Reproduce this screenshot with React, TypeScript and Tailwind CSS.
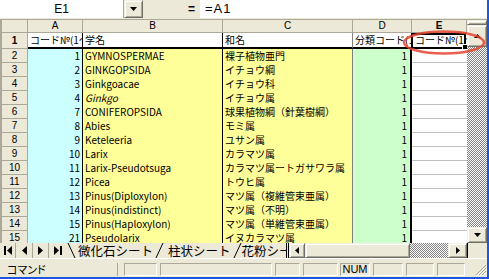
import React from "react";

type Row = { a: string; b: string; c: string; italic?: boolean };

const data: Row[] = [
  { a: "1", b: "GYMNOSPERMAE", c: "裸子植物亜門" },
  { a: "2", b: "GINKGOPSIDA", c: "イチョウ綱" },
  { a: "3", b: "Ginkgoacae", c: "イチョウ科" },
  { a: "4", b: "Ginkgo", c: "イチョウ属", italic: true },
  { a: "7", b: "CONIFEROPSIDA", c: "球果植物綱（針葉樹綱）" },
  { a: "8", b: "Abies", c: "モミ属" },
  { a: "9", b: "Keteleeria", c: "ユサン属" },
  { a: "10", b: "Larix", c: "カラマツ属" },
  { a: "11", b: "Larix-Pseudotsuga", c: "カラマツ属ートガサワラ属" },
  { a: "12", b: "Picea", c: "トウヒ属" },
  { a: "13", b: "Pinus(Diploxylon)", c: "マツ属（複維管束亜属）" },
  { a: "14", b: "Pinus(indistinct)", c: "マツ属（不明）" },
  { a: "15", b: "Pinus(Haploxylon)", c: "マツ属（単維管束亜属）" },
  { a: "21", b: "Pseudolarix", c: "イヌカラマツ属" },
];

function Tri({ dir, w, h }: { dir: "up" | "down" | "left" | "right"; w: number; h: number }) {
  let pts = "";
  if (dir === "up") pts = `0,${h} ${w},${h} ${w / 2},0`;
  if (dir === "down") pts = `0,0 ${w},0 ${w / 2},${h}`;
  if (dir === "left") pts = `${w},0 ${w},${h} 0,${h / 2}`;
  if (dir === "right") pts = `0,0 0,${h} ${w},${h / 2}`;
  return (
    <svg width={w} height={h} viewBox={`0 0 ${w} ${h}`}>
      <polygon points={pts} fill="#000" />
    </svg>
  );
}

const btn =
  "bg-[#ece9d8] border border-t-[#f1efe2] border-l-[#f1efe2] border-r-[#716f64] border-b-[#716f64] shadow-[inset_1px_1px_0_#ffffff,inset_-1px_-1px_0_#aca899] flex items-center justify-center";
const checker =
  "bg-[image:repeating-conic-gradient(#808080_0_25%,#ffffff_0_50%)] bg-[length:2px_2px]";
const hdr =
  "bg-[#ece9d8] border-r border-b border-[#aca899] flex items-center justify-center font-['Liberation_Sans',sans-serif] text-[10px] leading-none text-black";
const cell = "whitespace-nowrap overflow-hidden text-[10px] leading-[14px]";
const panel = "h-full border border-t-[#aca899] border-l-[#aca899] border-b-white border-r-white";

export default function App() {
  return (
    <div className="relative w-[489px] h-[279px] overflow-hidden bg-[#ece9d8] border-r-2 border-b-2 border-[#1a58e0] flex flex-col font-['Noto_Sans_CJK_JP',sans-serif] text-black">
      {/* formula bar */}
      <div className="h-[20px] shrink-0 flex items-start border-b border-[#aca899]">
        <div className="w-[124px] h-[18px] bg-white border-r border-[#aca899] flex items-center justify-center font-['Liberation_Sans',sans-serif] text-[12px]">
          E1
        </div>
        <div className={`w-[19px] h-[18px] ${btn}`}>
          <Tri dir="down" w={7} h={4} />
        </div>
        <div className="w-[57px] h-[18px] flex items-center justify-end pr-[5px] font-['Liberation_Sans',sans-serif] text-[12px] font-bold">
          =
        </div>
        <div className="flex-1 h-[18px] bg-white flex items-center pl-[5px] font-['Liberation_Sans',sans-serif] text-[13px] tracking-[1px]">
          =A1
        </div>
      </div>

      {/* sheet area */}
      <div className="h-[223px] shrink-0 flex">
        <div className="w-[467px] h-full overflow-hidden border-l-2 border-[#aca899] bg-white">
          <div className="grid grid-cols-[26px_55px_140px_130px_59px_55px] grid-rows-[13px_16px_repeat(14,14px)]">
            {/* header row */}
            <div className={hdr} />
            <div className={hdr}>A</div>
            <div className={hdr}>B</div>
            <div className={hdr}>C</div>
            <div className={hdr}>D</div>
            <div className={`${hdr} font-bold`}>E</div>

            {/* row 1 */}
            <div className={`${hdr} font-bold`}>1</div>
            <div className={`${cell} bg-white border-r border-black border-b-2 border-b-black pl-[2px]`}>コード№(1～</div>
            <div className={`${cell} bg-white border-r border-black border-b-2 border-b-black pl-[2px]`}>学名</div>
            <div className={`${cell} bg-white border-r border-[#808080] border-b-2 border-b-black pl-[2px]`}>和名</div>
            <div className={`${cell} bg-white border-r border-[#c0c0c0] border-b-2 border-b-black pl-[2px]`}>分類コード(1～</div>
            <div className="relative bg-white border-b-2 border-black">
              <div className={`${cell} pl-[3px] pr-[2px]`}>コード№(1～</div>
              <div className="absolute -left-px top-0 right-px -bottom-[2px] border-2 border-black" />
              <div className="absolute left-[50px] top-[11px] w-[6px] h-[6px] bg-black border border-white" />
            </div>

            {data.map((r, i) => (
              <React.Fragment key={i}>
                <div className={hdr}>{i + 2}</div>
                <div className={`${cell} bg-[#ccffff] border-r border-black text-right pr-[2px]`}>{r.a}</div>
                <div className={`${cell} bg-[#ffff99] border-r border-black pl-[2px] ${r.italic ? "italic" : ""}`}>{r.b}</div>
                <div className={`${cell} bg-[#ffff99] border-r border-[#808080] pl-[2px]`}>{r.c}</div>
                <div className={`${cell} bg-[#ccffcc] border-r-2 border-black text-right pr-[3px]`}>1</div>
                <div className="bg-white border-b border-[#c0c0c0]" />
              </React.Fragment>
            ))}
          </div>
        </div>

        {/* vertical scrollbar */}
        <div className="w-[20px] h-full flex flex-col">
          <div className={`h-[5px] ${btn}`} />
          <div className={`h-[22px] ${btn}`}>
            <Tri dir="up" w={7} h={4} />
          </div>
          <div className={`flex-1 ${checker}`} />
          <div className={`h-[16px] ${btn}`}>
            <Tri dir="down" w={7} h={4} />
          </div>
        </div>
      </div>

      {/* tab bar + horizontal scrollbar */}
      <div className="h-[15px] shrink-0 flex items-stretch">
        <div className="w-[66px] flex items-stretch">
          <div className="w-[16px] border-r border-[#aca899] flex items-center justify-center gap-[1px]">
            <div className="w-[2px] h-[9px] bg-black" />
            <Tri dir="left" w={5} h={9} />
          </div>
          <div className="w-[17px] border-r border-[#aca899] flex items-center justify-center">
            <Tri dir="left" w={5} h={9} />
          </div>
          <div className="w-[16px] border-r border-[#aca899] flex items-center justify-center">
            <Tri dir="right" w={5} h={9} />
          </div>
          <div className="w-[17px] flex items-center justify-center gap-[1px]">
            <Tri dir="right" w={5} h={9} />
            <div className="w-[2px] h-[9px] bg-black" />
          </div>
        </div>
        <div className="w-[220px] overflow-hidden flex items-stretch text-[12.5px] leading-[15px] whitespace-nowrap">
          <svg width="9" height="15" className="shrink-0 ml-[1px]">
            <line x1="1" y1="0" x2="8" y2="15" stroke="#000" strokeWidth="1" />
          </svg>
          <span className="ml-[2px]">微化石シート</span>
          <svg width="9" height="15" className="shrink-0 ml-[2px]">
            <line x1="1" y1="15" x2="8" y2="0" stroke="#000" strokeWidth="1" />
          </svg>
          <span className="ml-[4px]">柱状シート</span>
          <svg width="9" height="15" className="shrink-0 ml-[2px]">
            <line x1="1" y1="15" x2="8" y2="0" stroke="#000" strokeWidth="1" />
          </svg>
          <span>花粉シート</span>
        </div>
        <div className="w-[3px] border-l border-[#aca899] border-r border-black" />
        <div className={`w-[16px] ${btn}`}>
          <Tri dir="left" w={4} h={7} />
        </div>
        <div className={`w-[105px] ${btn}`} />
        <div className={`w-[38px] ${checker}`} />
        <div className={`w-[19px] ${btn}`}>
          <Tri dir="right" w={4} h={7} />
        </div>
        <div className="w-[20px] border-l border-black" />
      </div>

      {/* status bar */}
      <div className="h-[19px] shrink-0 flex pt-[4px] pb-[1px] border-t border-white">
        <div className="w-[118px] h-full border-r border-[#aca899] flex items-center pl-[7px] text-[11px] [font-feature-settings:'palt']">
          コマンド
        </div>
        <div className={`ml-[6px] w-[33px] ${panel}`} />
        <div className={`ml-[3px] w-[112px] ${panel}`} />
        <div className={`ml-[3px] w-[25px] ${panel}`} />
        <div className={`ml-[3px] w-[35px] ${panel}`} />
        <div className={`ml-[2px] w-[30px] ${panel} flex items-center justify-center font-['Liberation_Sans',sans-serif] text-[11px] leading-none`}>
          NUM
        </div>
        <div className={`ml-[3px] w-[30px] ${panel}`} />
        <div className={`ml-[3px] w-[28px] ${panel}`} />
        <div className={`ml-[3px] w-[28px] ${panel}`} />
        <div className="flex-1 h-full flex items-end justify-end">
          <svg width="12" height="12" viewBox="0 0 12 12">
            <line x1="11" y1="1" x2="1" y2="11" stroke="#aca899" strokeWidth="1" />
            <line x1="11" y1="4" x2="4" y2="11" stroke="#aca899" strokeWidth="1" />
            <line x1="11" y1="7" x2="7" y2="11" stroke="#aca899" strokeWidth="1" />
            <line x1="12" y1="2" x2="2" y2="12" stroke="#fff" strokeWidth="1" />
            <line x1="12" y1="5" x2="5" y2="12" stroke="#fff" strokeWidth="1" />
            <line x1="12" y1="8" x2="8" y2="12" stroke="#fff" strokeWidth="1" />
          </svg>
        </div>
      </div>

      {/* annotation ellipse */}
      <svg className="absolute left-0 top-0 pointer-events-none" width="489" height="279">
        <ellipse cx="444" cy="42.5" rx="40" ry="11" fill="none" stroke="#e5452f" strokeOpacity="0.85" strokeWidth="2.5" />
      </svg>
    </div>
  );
}
